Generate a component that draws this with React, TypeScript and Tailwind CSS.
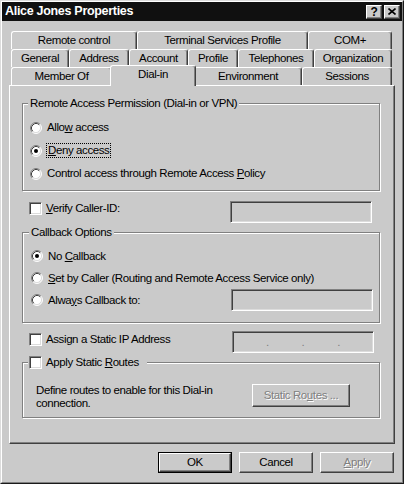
import React from "react";

type TabProps = { label: string; width: string; active?: boolean };

const Tab: React.FC<TabProps> = ({ label, width, active = false }) => (
  <div
    className={
      active
        ? `${width} relative z-10 -mx-[2px] -mt-[2px] -mb-[1px] h-[21px] pb-[3px] flex items-center justify-center bg-[#cacaca] border-l border-t border-r border-l-white border-t-white border-r-[#404040] rounded-t-[3px] shadow-[inset_-1px_0_0_#808080]`
      : `${width} h-[18px] flex items-center justify-center border-l border-t border-r border-l-white border-t-white border-r-[#404040] rounded-t-[3px] shadow-[inset_-1px_0_0_#808080]`
    }
  >
    {label}
  </div>
);

const Radio: React.FC<{ checked?: boolean }> = ({ checked = false }) => (
  <svg width="12" height="12" viewBox="0 0 12 12" className="shrink-0">
    <circle cx="6" cy="6" r="5" fill="#fff" />
    <path d="M2.11 9.89 A5.5 5.5 0 0 1 9.89 2.11" stroke="#808080" fill="none" />
    <path d="M9.89 2.11 A5.5 5.5 0 0 1 2.11 9.89" stroke="#fff" fill="none" />
    <path d="M2.82 9.18 A4.5 4.5 0 0 1 9.18 2.82" stroke="#404040" fill="none" />
    <path d="M9.18 2.82 A4.5 4.5 0 0 1 2.82 9.18" stroke="#dcdcdc" fill="none" />
    {checked && <circle cx="6" cy="6" r="2" fill="#000" />}
  </svg>
);

const Checkbox = () => (
  <span className="block shrink-0 w-[13px] h-[13px] bg-white border border-t-[#808080] border-l-[#808080] border-r-white border-b-white shadow-[inset_1px_1px_0_#404040,inset_-1px_-1px_0_#dcdcdc]" />
);

const Field: React.FC<{ className: string; children?: React.ReactNode }> = ({ className, children }) => (
  <div
    className={`${className} h-[22px] bg-[#cacaca] border border-t-[#808080] border-l-[#808080] border-r-white border-b-white shadow-[inset_1px_1px_0_#404040,inset_-1px_-1px_0_#dcdcdc]`}
  >
    {children}
  </div>
);

const Button: React.FC<{ children: React.ReactNode; disabled?: boolean; className?: string }> = ({
  children,
  disabled = false,
  className = "",
}) => (
  <div
    className={`${className} flex items-center justify-center border border-t-white border-l-white border-r-[#404040] border-b-[#404040] shadow-[inset_-1px_-1px_0_#808080] ${
      disabled ? "text-[#808080] [text-shadow:1px_1px_0_#fff]" : "text-black"
    }`}
  >
    {children}
  </div>
);

export default function App() {
  return (
    <div className="w-[404px] h-[484px] bg-[#cacaca] border border-t-[#dcdcdc] border-l-[#dcdcdc] border-r-[#1a1a1a] border-b-[#1a1a1a] font-['Liberation_Sans',Arial,sans-serif] text-[11.5px] tracking-[-0.4px] text-black leading-[13px] select-none">
      <div className="h-full flex flex-col border border-t-white border-l-white border-r-[#808080] border-b-[#808080]">
        {/* title bar */}
        <div className="h-[19px] bg-[#101010] flex items-center justify-between pl-[3px] pr-[2px]">
          <span className="text-white font-bold text-[12.5px] tracking-[-0.3px]">Alice Jones Properties</span>
          <div className="flex gap-[2px]">
            <Button className="w-[16px] h-[14px] bg-[#cacaca]">
              <span className="font-bold text-[12px] leading-none">?</span>
            </Button>
            <Button className="w-[16px] h-[14px] bg-[#cacaca]">
              <svg width="8" height="7" viewBox="0 0 8 7">
                <path d="M0.5 0.5 L7.5 6.5 M7.5 0.5 L0.5 6.5" stroke="#000" strokeWidth="1.6" />
              </svg>
            </Button>
          </div>
        </div>

        {/* tabs */}
        <div className="mt-[10px] ml-[9px] w-[381px] flex flex-col">
          <div className="flex">
            <Tab label="Remote control" width="w-[126px]" />
            <Tab label="Terminal Services Profile" width="w-[171px]" />
            <Tab label="COM+" width="w-[84px]" />
          </div>
          <div className="flex">
            <Tab label="General" width="w-[58px]" />
            <Tab label="Address" width="w-[60px]" />
            <Tab label="Account" width="w-[59px]" />
            <Tab label="Profile" width="w-[50px]" />
            <Tab label="Telephones" width="w-[76px]" />
            <Tab label="Organization" width="w-[78px]" />
          </div>
          <div className="flex">
            <Tab label="Member Of" width="w-[101px]" />
            <Tab label="Dial-in" width="w-[86px]" active />
            <Tab label="Environment" width="w-[108px]" />
            <Tab label="Sessions" width="w-[90px]" />
          </div>
        </div>

        {/* panel */}
        <div className="ml-[7px] w-[386px] h-[359px] flex flex-col border border-t-white border-l-white border-r-[#404040] border-b-[#404040] shadow-[inset_-1px_-1px_0_#808080]">
          <fieldset className="mt-[11px] ml-[12px] w-[358px] h-[94px] border border-[#808080] shadow-[1px_1px_0_#fff,inset_1px_1px_0_#fff]">
            <legend className="ml-[5px] px-[2px] bg-[#cacaca]">Remote Access Permission (Dial-in or VPN)</legend>
            <div className="flex flex-col pt-[6px] pl-[7px]">
              <div className="h-[23px] flex items-center gap-[5px]">
                <Radio />
                <span>
                  Allo<u>w</u> access
                </span>
              </div>
              <div className="h-[23px] flex items-center gap-[4px]">
                <Radio checked />
                <span className="border border-dotted border-black px-[1px]">
                  <u>D</u>eny access
                </span>
              </div>
              <div className="h-[23px] flex items-center gap-[5px]">
                <Radio />
                <span>
                  Control access through Remote Access <u>P</u>olicy
                </span>
              </div>
            </div>
          </fieldset>

          <div className="mt-[10px] h-[22px] flex items-start pl-[19px] pr-[22px]">
            <div className="mt-[1px] flex items-center gap-[4px]">
              <Checkbox />
              <span>
                <u>V</u>erify Caller-ID:
              </span>
            </div>
            <Field className="ml-auto w-[142px]" />
          </div>

          <fieldset className="mt-[3px] ml-[12px] w-[358px] h-[97px] border border-[#808080] shadow-[1px_1px_0_#fff,inset_1px_1px_0_#fff]">
            <legend className="ml-[6px] px-[2px] bg-[#cacaca]">Callback Options</legend>
            <div className="flex flex-col pt-[6px] pl-[8px] pr-[6px]">
              <div className="h-[22px] flex items-center gap-[5px]">
                <Radio checked />
                <span>
                  No <u>C</u>allback
                </span>
              </div>
              <div className="h-[22px] flex items-center gap-[5px]">
                <Radio />
                <span>
                  <u>S</u>et by Caller (Routing and Remote Access Service only)
                </span>
              </div>
              <div className="h-[22px] flex items-center gap-[5px]">
                <Radio />
                <span>
                  Alwa<u>y</u>s Callback to:
                </span>
                <Field className="ml-auto w-[142px]" />
              </div>
            </div>
          </fieldset>

          <div className="mt-[8px] h-[22px] flex items-start pl-[19px] pr-[20px]">
            <div className="mt-[2px] flex items-center gap-[4px]">
              <Checkbox />
              <span>Assign a Static IP Address</span>
            </div>
            <Field className="ml-auto w-[142px] flex items-center justify-evenly text-[#808080]">
              <span>.</span>
              <span>.</span>
              <span>.</span>
            </Field>
          </div>

          <fieldset className="mt-[3px] ml-[12px] w-[358px] h-[62px] border border-[#808080] shadow-[1px_1px_0_#fff,inset_1px_1px_0_#fff]">
            <legend className="ml-[5px] pl-[1px] pr-[8px] bg-[#cacaca]">
              <span className="flex items-center gap-[4px]">
                <Checkbox />
                <span>
                  Apply Static <u>R</u>outes
                </span>
              </span>
            </legend>
            <div className="flex items-start pt-[15px] pl-[13px] pr-[29px]">
              <p>
                Define routes to enable for this Dial-in
                <br />
                connection.
              </p>
              <Button disabled className="ml-auto w-[98px] h-[23px]">
                <span>
                  Static Ro<u>u</u>tes ...
                </span>
              </Button>
            </div>
          </fieldset>
        </div>

        {/* bottom buttons */}
        <div className="mt-[8px] flex justify-end gap-[7px] pr-[8px]">
          <div className="w-[74px] h-[21px] border border-black">
            <Button className="w-full h-full">OK</Button>
          </div>
          <Button className="w-[74px] h-[21px]">Cancel</Button>
          <Button disabled className="w-[74px] h-[21px]">
            <span>
              <u>A</u>pply
            </span>
          </Button>
        </div>
      </div>
    </div>
  );
}
